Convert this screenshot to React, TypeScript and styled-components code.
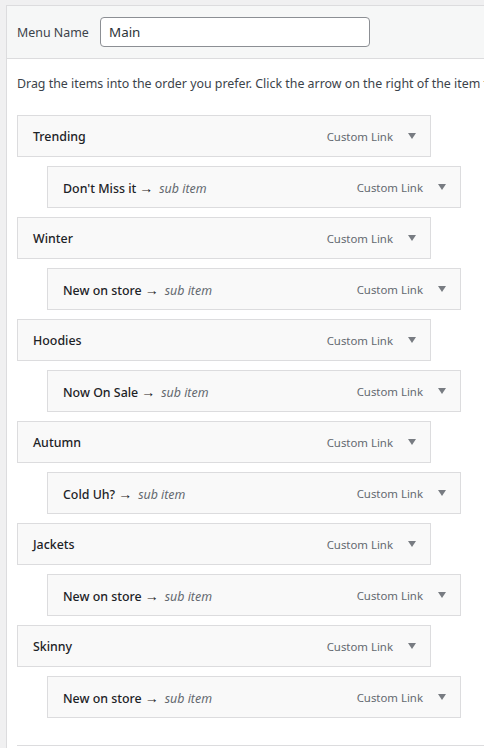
import React from 'react';
import styled, { createGlobalStyle } from 'styled-components';

const GlobalStyle = createGlobalStyle`
    html, body {
        margin: 0;
        padding: 0;
        background: #f0f0f1;
        overflow: hidden;
    }
    body {
        font-family: "Noto Sans", "Open Sans", "Liberation Sans", sans-serif;
        font-size: 12.4px;
        color: #3c434a;
    }
`

const Panel = styled.div`
    margin: 5px 0 0 6px;
    width: 640px;
    border: 1px solid #dcdcde;
    border-right: none;
    background: #fff;
`

const Header = styled.div`
    display: flex;
    align-items: center;
    height: 53px;
    padding: 0 10px;
    background: #f6f7f7;
    border-bottom: 1px solid #dcdcde;
    box-sizing: border-box;
`

const Label = styled.label`
    width: 83px;
    color: #3c434a;
    white-space: nowrap;
`

const NameInput = styled.input`
    width: 270px;
    height: 30px;
    box-sizing: border-box;
    padding: 0 8px;
    border: 1px solid #8c8f94;
    border-radius: 4px;
    font-family: inherit;
    font-size: 13.4px;
    color: #2c3338;
    background: #fff;
    outline: none;
`

const Body = styled.div`
    padding: 15px 10px 0 10px;
`

const Instructions = styled.p`
    margin: 0 0 22px 0;
    line-height: 19px;
    white-space: nowrap;
`

const List = styled.ul`
    list-style: none;
    margin: 0;
    padding: 0 0 27px 0;
    display: flex;
    flex-direction: column;
    gap: 9px;
`

const Item = styled.li<{ $depth: number }>`
    display: flex;
    align-items: center;
    width: 414px;
    height: 42px;
    box-sizing: border-box;
    margin-left: ${p => p.$depth * 30}px;
    padding: 0 14px 0 15px;
    border: 1px solid #dcdcde;
    background: #f9f9f9;
`

const Title = styled.span`
    flex: 1;
    font-weight: 500;
    color: #1d2327;
    white-space: nowrap;
`

const Dash = styled.span`
    font-size: 14px;
    margin-left: 3px;
`

const SubLabel = styled.span`
    font-weight: 400;
    font-style: italic;
    color: #646970;
    margin-left: 6px;
`

const TypeLabel = styled.span`
    color: #646970;
    font-size: 11.4px;
    margin-right: 15px;
`

const Arrow = styled.span`
    width: 0;
    height: 0;
    border-left: 4px solid transparent;
    border-right: 4px solid transparent;
    border-top: 6px solid #787c82;
`

const Footer = styled.div`
    margin: 0 10px;
    border-top: 1px solid #dcdcde;
    height: 40px;
`

const items = [
    { title: 'Trending', sub: "Don't Miss it" },
    { title: 'Winter', sub: 'New on store' },
    { title: 'Hoodies', sub: 'Now On Sale' },
    { title: 'Autumn', sub: 'Cold Uh?' },
    { title: 'Jackets', sub: 'New on store' },
    { title: 'Skinny', sub: 'New on store' },
]

const App: React.FC = () => {
    return <>
        <GlobalStyle />
        <Panel>
            <Header>
                <Label>Menu Name</Label>
                <NameInput defaultValue="Main" />
            </Header>
            <Body>
                <Instructions>Drag the items into the order you prefer. Click the arrow on the right of the item to reveal additional configuration options.</Instructions>
                <List>
                    {
                        items.map(it => <React.Fragment key={it.title}>
                            <Item $depth={0}>
                                <Title>{it.title}</Title>
                                <TypeLabel>Custom Link</TypeLabel>
                                <Arrow />
                            </Item>
                            <Item $depth={1}>
                                <Title>{it.sub}<Dash>→</Dash><SubLabel>sub item</SubLabel></Title>
                                <TypeLabel>Custom Link</TypeLabel>
                                <Arrow />
                            </Item>
                        </React.Fragment>)
                    }
                </List>
            </Body>
            <Footer />
        </Panel>
    </>
}

export default App;
